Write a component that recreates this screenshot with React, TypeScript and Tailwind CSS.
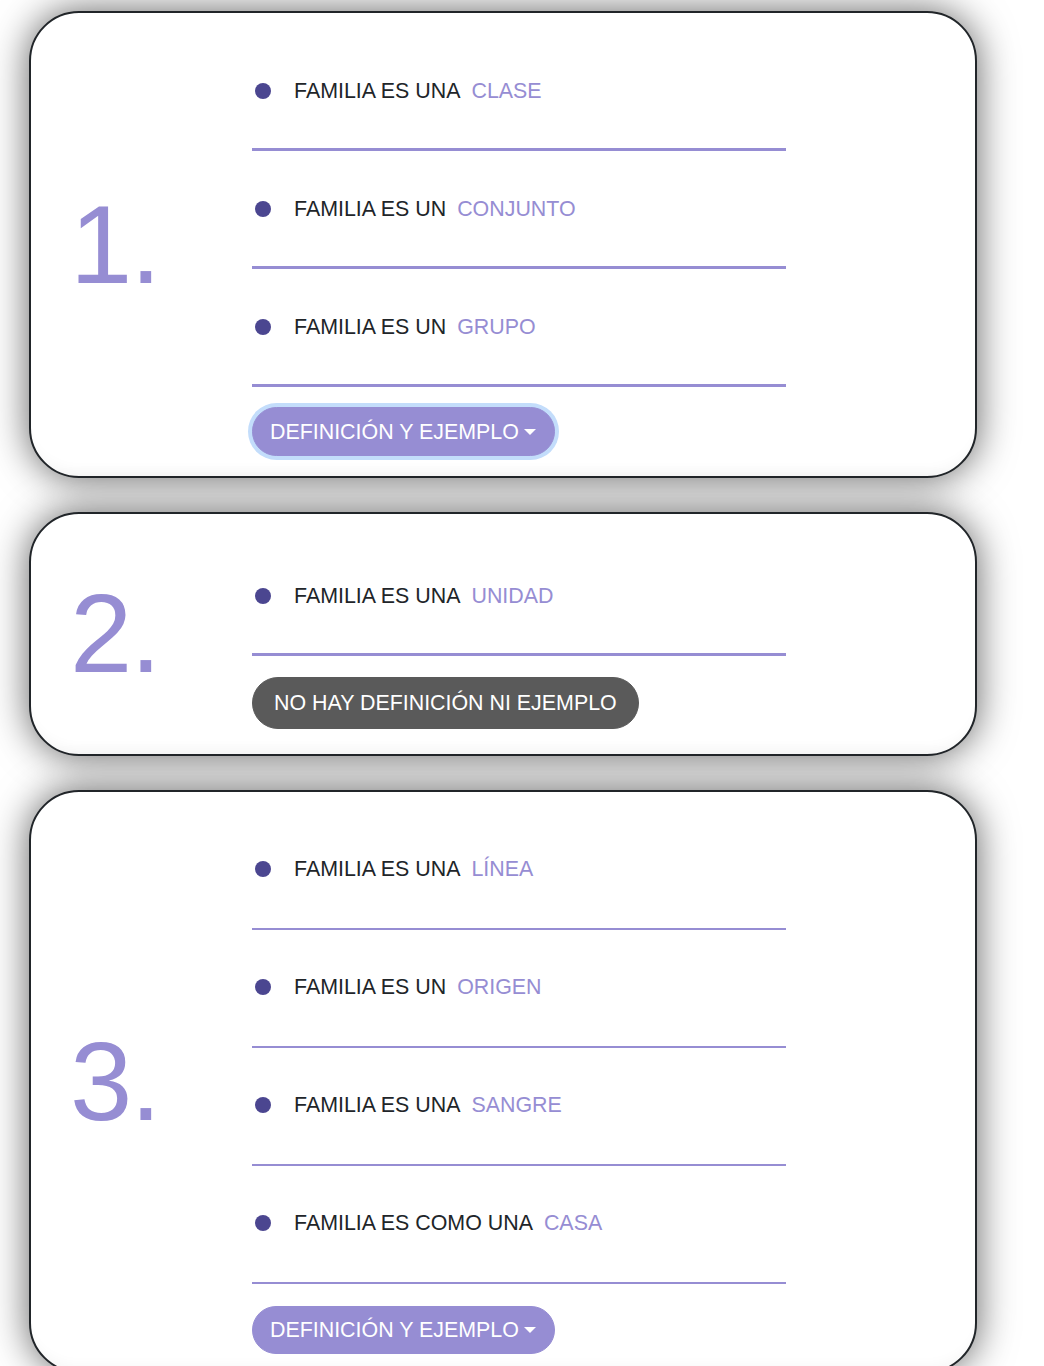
import React from "react";

type Row = { pre: string; word: string };

function Caret() {
  return (
    <span className="ml-[5px] inline-block h-0 w-0 border-l-[6px] border-r-[6px] border-t-[6px] border-l-transparent border-r-transparent border-t-white align-[3px]" />
  );
}

function Bullet() {
  return <span className="h-4 w-4 shrink-0 rounded-full bg-[#4b4690]" />;
}

function Rows({ rows, thick }: { rows: Row[]; thick: boolean }) {
  return (
    <div className="flex flex-col">
      {rows.map((r, i) => (
        <div
          key={i}
          className={
            thick
              ? "flex items-center gap-[23px] border-b-[3px] border-[#968dd3] pl-[3px] pt-[42px] pb-[41px]"
              : "flex items-center gap-[23px] border-b-2 border-[#968dd3] pl-[3px] pt-[41px] pb-[43px]"
          }
        >
          <Bullet />
          <span className="text-[21.4px] leading-[32px] text-[#212529]">
            {r.pre}
            <span className="ml-[11px] text-[#968dd3]">{r.word}</span>
          </span>
        </div>
      ))}
    </div>
  );
}

function Card({
  num,
  children,
  pad,
}: {
  num: string;
  children: React.ReactNode;
  pad: string;
}) {
  return (
    <div className="ml-[29px] flex w-[948px] items-center rounded-[50px] border-2 border-[#212529] bg-white shadow-[0_0_38px_rgba(0,0,0,0.62),inset_0_-14px_14px_-10px_rgba(0,0,0,0.04)]">
      <div className="w-[221px] shrink-0 pl-[39px] text-[112px] leading-none tracking-[-2px] text-[#968dd3]">
        {num}
      </div>
      <div className={"w-[534px] " + pad}>{children}</div>
    </div>
  );
}

export default function App() {
  return (
    <div className="flex min-h-screen flex-col gap-[34px] bg-white pt-[11px] pb-10 font-['Liberation_Sans',Arial,sans-serif]">
      <Card num="1." pad="pt-5 pb-5">
        <Rows
          thick
          rows={[
            { pre: "FAMILIA ES UNA", word: "CLASE" },
            { pre: "FAMILIA ES UN", word: "CONJUNTO" },
            { pre: "FAMILIA ES UN", word: "GRUPO" },
          ]}
        />
        <div className="mt-5">
          <button className="inline-flex h-[49px] items-center rounded-full border border-[#968dd3] bg-[#968dd3] pl-[17px] pr-[18px] text-[21.4px] leading-[32px] text-white ring-4 ring-[#c3ddfb]">
            DEFINICIÓN Y EJEMPLO
            <Caret />
          </button>
        </div>
      </Card>

      <Card num="2." pad="pt-6 pb-[25px]">
        <Rows thick rows={[{ pre: "FAMILIA ES UNA", word: "UNIDAD" }]} />
        <div className="mt-[21px]">
          <button className="inline-flex h-[52px] items-center rounded-full border border-[#5a5a5a] bg-[#5a5a5a] px-[21px] text-[21.4px] leading-[32px] text-white">
            NO HAY DEFINICIÓN NI EJEMPLO
          </button>
        </div>
      </Card>

      <Card num="3." pad="pt-5 pb-[17px]">
        <Rows
          thick={false}
          rows={[
            { pre: "FAMILIA ES UNA", word: "LÍNEA" },
            { pre: "FAMILIA ES UN", word: "ORIGEN" },
            { pre: "FAMILIA ES UNA", word: "SANGRE" },
            { pre: "FAMILIA ES COMO UNA", word: "CASA" },
          ]}
        />
        <div className="mt-[22px]">
          <button className="inline-flex h-[48px] items-center rounded-full border border-[#968dd3] bg-[#968dd3] pl-[17px] pr-[18px] text-[21.4px] leading-[32px] text-white">
            DEFINICIÓN Y EJEMPLO
            <Caret />
          </button>
        </div>
      </Card>
    </div>
  );
}
